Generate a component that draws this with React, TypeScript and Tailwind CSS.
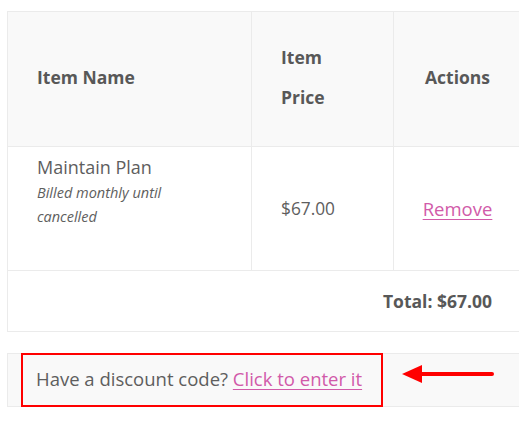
import React from 'react';

const font = { fontFamily: '"Open Sans", "Noto Sans", sans-serif' };

export default function App() {
  return (
    <div className="min-h-[423px] w-[519px] overflow-hidden bg-white text-[#5e5e5e]" style={font}>
      <div className="w-[514px] pl-[7px] pt-[11px]">
        <table className="w-[514px] table-fixed border-collapse border border-[#ebebeb]">
          <colgroup>
            <col className="w-[244px]" />
            <col className="w-[142px]" />
            <col className="w-[128px]" />
          </colgroup>
          <thead>
            <tr className="h-[135px] bg-[#f9f9f9]">
              <th className="border border-[#ebebeb] px-[29px] pb-[4px] text-left text-[17.5px] font-bold leading-[40px] text-[#585858]">
                Item Name
              </th>
              <th className="border border-[#ebebeb] px-[29px] pb-[4px] text-left text-[17.5px] font-bold leading-[40px] text-[#585858]">
                Item
                <br />
                Price
              </th>
              <th className="border border-[#ebebeb] pb-[4px] text-center text-[17.5px] font-bold leading-[40px] text-[#585858]">
                Actions
              </th>
            </tr>
          </thead>
          <tbody>
            <tr className="h-[124px]">
              <td className="border border-[#ebebeb] px-[29px] pt-[8px] align-top">
                <div className="text-[18px] leading-[24px]">Maintain Plan</div>
                <div className="mt-[2px] text-[14.5px] italic leading-[24px]">
                  Billed monthly until
                  <br />
                  cancelled
                </div>
              </td>
              <td className="border border-[#ebebeb] px-[29px] text-[17.3px]">$67.00</td>
              <td className="border border-[#ebebeb] text-center text-[18.5px]">
                <a className="text-[#d15aa9] underline underline-offset-[3px]">Remove</a>
              </td>
            </tr>
            <tr className="h-[61px]">
              <td colSpan={3} className="border border-[#ebebeb] px-[29px] text-right text-[17.5px] font-bold text-[#585858]">
                Total: $67.00
              </td>
            </tr>
          </tbody>
        </table>
      </div>

      <div className="mt-[21px] ml-[7px] flex h-[54px] w-[520px] items-center border border-[#ebebeb] bg-[#f9f9f9]">
        <div className="relative flex h-full w-[374px] shrink-0 items-center pb-[3px] pl-[28px] text-[18.5px] whitespace-nowrap">
          Have a discount code?&nbsp;
          <a className="text-[#d15aa9] underline underline-offset-[3px]">Click to enter it</a>
          <div className="absolute -top-[1px] left-[13px] h-[54px] w-[362px] border-2 border-[#f00]" />
        </div>
        <svg className="ml-[20px] -mt-[12px]" width="94" height="22" viewBox="0 0 94 22">
          <polygon points="0,11 20,2 20,20" fill="#f00" />
          <line x1="18" y1="11" x2="90" y2="11" stroke="#f00" strokeWidth="4" strokeLinecap="round" />
        </svg>
      </div>
    </div>
  );
}
